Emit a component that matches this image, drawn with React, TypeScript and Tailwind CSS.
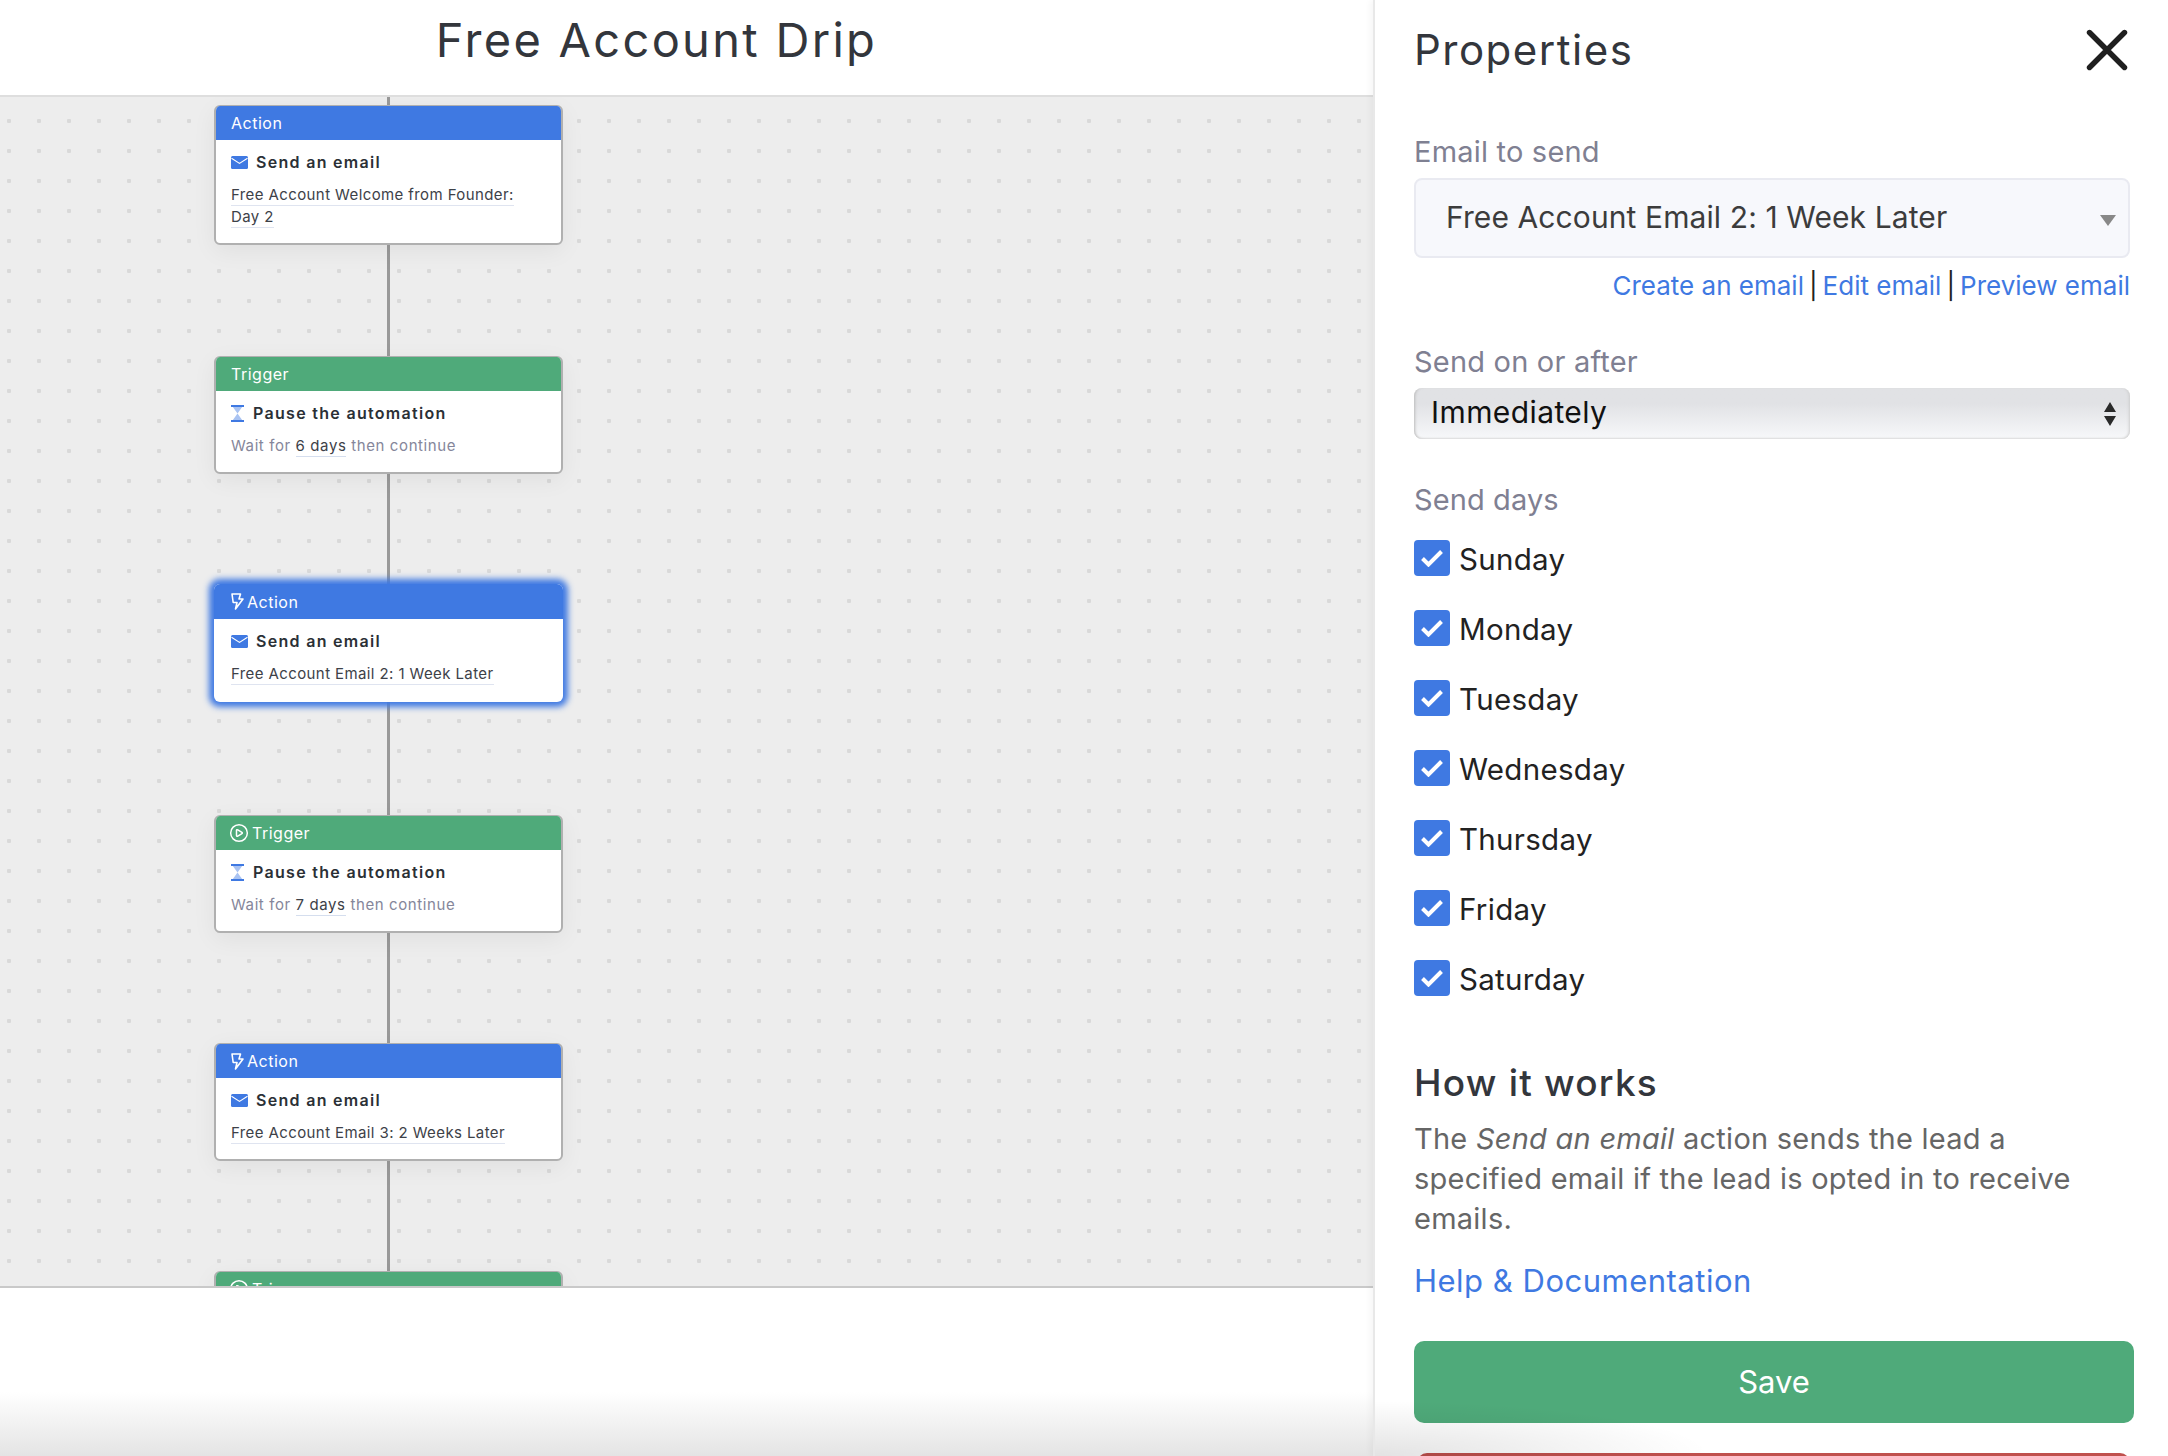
import React from "react";
import { CirclePlay } from "lucide-react";

type Step = {
  kind: "action" | "trigger";
  showIcon?: boolean;
  selected?: boolean;
  lines?: string[];
  days?: string;
  gap: number;
};

const steps: Step[] = [
  { kind: "action", lines: ["Free Account Welcome from Founder:", "Day 2"], gap: 111 },
  { kind: "trigger", days: "6 days", gap: 110 },
  { kind: "action", showIcon: true, selected: true, lines: ["Free Account Email 2: 1 Week Later"], gap: 113 },
  { kind: "trigger", showIcon: true, days: "7 days", gap: 110 },
  { kind: "action", showIcon: true, lines: ["Free Account Email 3: 2 Weeks Later"], gap: 110 },
  // only the top of this one is visible above the canvas edge
  { kind: "trigger", showIcon: true, gap: 0 },
];

const sendDays = ["Sunday", "Monday", "Tuesday", "Wednesday", "Thursday", "Friday", "Saturday"];

function MailIcon() {
  return (
    <svg width="17" height="13" viewBox="0 0 17 13" className="shrink-0">
      <rect width="17" height="13" rx="1.5" fill="#3f79e2" />
      <path d="M0.5 2.2 8.5 7.4 16.5 2.2" fill="none" stroke="#fff" strokeWidth="1.2" />
    </svg>
  );
}

function HourglassIcon() {
  return (
    <svg width="13" height="17" viewBox="0 0 13 17" className="shrink-0">
      <path d="M1.5 1.5h10L6.5 8.5 11.5 15.5h-10L6.5 8.5z" fill="#a9c3f2" />
      <rect width="13" height="2" fill="#3f79e2" />
      <rect y="15" width="13" height="2" fill="#3f79e2" />
    </svg>
  );
}

function BoltIcon() {
  return (
    <svg width="13" height="17" viewBox="0 0 13 17" fill="none" stroke="#fff" strokeWidth="1.6" strokeLinejoin="round" className="shrink-0">
      <path d="M1 1h8.5L8 6h4L4.5 16 6 9.5H2.2z" />
    </svg>
  );
}

function StepCard({ step }: { step: Step }) {
  const isAction = step.kind === "action";
  return (
    <div
      className={`relative z-10 w-[349px] shrink-0 overflow-hidden rounded-[6px] bg-white ${
        step.selected
          ? "border-0 shadow-[0_0_6px_5px_#3f79e2]"
          : "border-2 border-t-[1px] border-[#b0b0b0] shadow-[0_6px_24px_rgba(0,0,0,0.06)]"
      }`}
    >
      <div
        className={`flex items-center gap-[3px] text-[16px] tracking-[0.5px] text-white ${
          isAction ? "bg-[#3f79e2]" : "bg-[#4faa7a]"
        } ${step.selected ? "h-[35px] pl-[17px]" : "h-[34px] pl-[15px]"}`}
      >
        {step.showIcon &&
          (isAction ? <BoltIcon /> : <CirclePlay size={20} strokeWidth={1.8} className="-ml-[2px] shrink-0" />)}
        <span>{isAction ? "Action" : "Trigger"}</span>
      </div>

      {isAction ? (
        <div className={`pt-[12px] ${step.selected ? "pb-[17px] pl-[17px]" : "pb-[15px] pl-[15px]"}`}>
          <div className="flex h-[20px] items-center gap-[8px] text-[16px] font-semibold tracking-[1.3px] text-[#2b3036]">
            <MailIcon />
            <span>Send an email</span>
          </div>
          <div className="mt-[12px] flex flex-col items-start text-[15px] tracking-[0.4px] text-[#3d4148]">
            {step.lines?.map((line) => (
              <span key={line} className="border-b border-[#dfe4f0] leading-[21px]">
                {line}
              </span>
            ))}
          </div>
        </div>
      ) : (
        step.days && (
          <div className="pb-[16px] pl-[15px] pt-[12px]">
            <div className="flex h-[20px] items-center gap-[9px] text-[16px] font-semibold tracking-[1.3px] text-[#2b3036]">
              <HourglassIcon />
              <span>Pause the automation</span>
            </div>
            <div className="mt-[12px] text-[15px] leading-[21px] tracking-[0.6px] text-[#85869a]">
              Wait for{" "}
              <span className="border-b border-[#d5deee] pb-px text-[#3d4148]">{step.days}</span> then continue
            </div>
          </div>
        )
      )}
    </div>
  );
}

function CheckRow({ label }: { label: string }) {
  return (
    <div className="flex h-[36px] items-center gap-[9px]">
      <div className="flex h-[36px] w-[36px] items-center justify-center rounded-[4px] bg-[#3f79e2]">
        <svg width="22" height="18" viewBox="0 0 22 18" fill="none" stroke="#fff" strokeWidth="4">
          <path d="M1.5 9.5 7.5 15.5 20.5 2.5" />
        </svg>
      </div>
      <span className="pt-[2px] text-[29.5px] tracking-[0.3px] text-[#222]">{label}</span>
    </div>
  );
}

export default function App() {
  return (
    <div className="relative flex h-screen w-full overflow-hidden bg-white font-[Inter,sans-serif]">
      {/* Left: drip title and canvas */}
      <div className="relative flex w-[1373px] shrink-0 flex-col">
        <div className="flex h-[97px] shrink-0 items-start justify-center border-b-2 border-[#dedede] pr-[60px] pt-[9px]">
          <h1 className="text-[47px] leading-[62px] tracking-[2.3px] text-[#33363c]">Free Account Drip</h1>
        </div>
        <div className="h-[1191px] shrink-0 overflow-hidden border-b-2 border-[#c9c9c9] bg-[#ededed] bg-[radial-gradient(circle,#d9d9d9_2px,transparent_2.5px)] bg-[length:30px_30px] bg-[position:-6px_9px] pl-[214px]">
          <div className="flex w-[349px] flex-col items-center">
            <div className="h-[8px] w-[3px] shrink-0 bg-[#999]" />
            {steps.map((step, i) => (
              <React.Fragment key={i}>
                <StepCard step={step} />
                <div className="w-[3px] shrink-0 bg-[#999]" style={{ height: step.gap }} />
              </React.Fragment>
            ))}
          </div>
        </div>
        <div className="flex-1 bg-gradient-to-b from-white from-[62%] to-[#e4e4e4]" />
      </div>

      {/* Right: properties panel */}
      <div className="relative flex-1 overflow-hidden border-l-2 border-[#e8e8e8] pl-[39px] pr-[38px] shadow-[-3px_0_6px_rgba(0,0,0,0.04)]">
        <div className="flex h-[100px] items-center justify-between">
          <h2 className="pb-[2px] text-[42px] tracking-[1.5px] text-[#33363c]">Properties</h2>
          <svg width="42" height="42" viewBox="0 0 42 42" fill="none" stroke="#1f1f1f" strokeWidth="5.4" strokeLinecap="round" className="mr-[2px]">
            <path d="M3.5 3.5 38.5 38.5M38.5 3.5 3.5 38.5" />
          </svg>
        </div>

        <div className="mt-[32px] text-[29px] leading-[40px] tracking-[0.2px] text-[#7f8092]">Email to send</div>
        <div className="relative mt-[6px] flex h-[80px] items-center rounded-[8px] border-2 border-[#e9eaf1] bg-[#f7f8fc] pb-[2px] pl-[30px] text-[30px] tracking-[0.1px] text-[#3c3c3c]">
          Free Account Email 2: 1 Week Later
          <svg width="16" height="11" viewBox="0 0 16 11" className="absolute right-[12px] top-[35px]">
            <path d="M0 0h16L8 11z" fill="#888" />
          </svg>
        </div>
        <div className="mt-[9px] flex h-[36px] items-center justify-end gap-[5px] text-[26px] text-[#222]">
          <span className="text-[#3f79e2]">Create an email</span>|<span className="text-[#3f79e2]">Edit email</span>|
          <span className="text-[#3f79e2]">Preview email</span>
        </div>

        <div className="mt-[39px] text-[29px] leading-[40px] tracking-[0.2px] text-[#7f8092]">Send on or after</div>
        <div className="relative mt-[6px] flex h-[51px] items-center rounded-[8px] bg-gradient-to-b from-[#e1e2e5] from-30% to-[#f7f8fa] pb-[2px] pl-[17px] text-[30px] tracking-[0.4px] text-[#111] shadow-[inset_3px_0_3px_-2px_#bbb,inset_-3px_0_3px_-2px_#ccc,inset_0_-2px_2px_-1px_#ddd]">
          Immediately
          <svg width="12" height="24" viewBox="0 0 12 24" className="absolute right-[14px] top-[14px]">
            <path d="M6 0 12 10H0zM0 14h12L6 24z" fill="#2a2a2a" />
          </svg>
        </div>

        <div className="mt-[41px] text-[29px] leading-[40px] tracking-[0.1px] text-[#7f8092]">Send days</div>
        <div className="mt-[20px] flex flex-col gap-[34px]">
          {sendDays.map((day) => (
            <CheckRow key={day} label={day} />
          ))}
        </div>

        <h3 className="mt-[62px] text-[37px] font-medium leading-[50px] tracking-[1.2px] text-[#33363c]">How it works</h3>
        <p className="mt-[11px] text-[29px] leading-[40px] tracking-[0.25px] text-[#666]">
          The <em>Send an email</em> action sends the lead a specified email if the lead is opted in to receive emails.
        </p>
        <div className="mt-[22px] text-[31px] leading-[40px] tracking-[0.5px] text-[#3f79e2]">Help &amp; Documentation</div>

        <div className="mt-[40px] flex h-[82px] w-[720px] items-center justify-center rounded-[10px] bg-[#4faa7a] text-[31px] text-white">
          Save
        </div>
        <div className="ml-[3px] mt-[30px] h-[60px] w-[713px] rounded-[10px] bg-[#c0504d]" />

        {/* Soft shade spilling in from the bottom edge */}
        <div className="pointer-events-none absolute bottom-0 left-0 h-[56px] w-[340px] bg-[radial-gradient(ellipse_at_0%_100%,rgba(0,0,0,0.11),transparent_70%)]" />
      </div>
    </div>
  );
}
